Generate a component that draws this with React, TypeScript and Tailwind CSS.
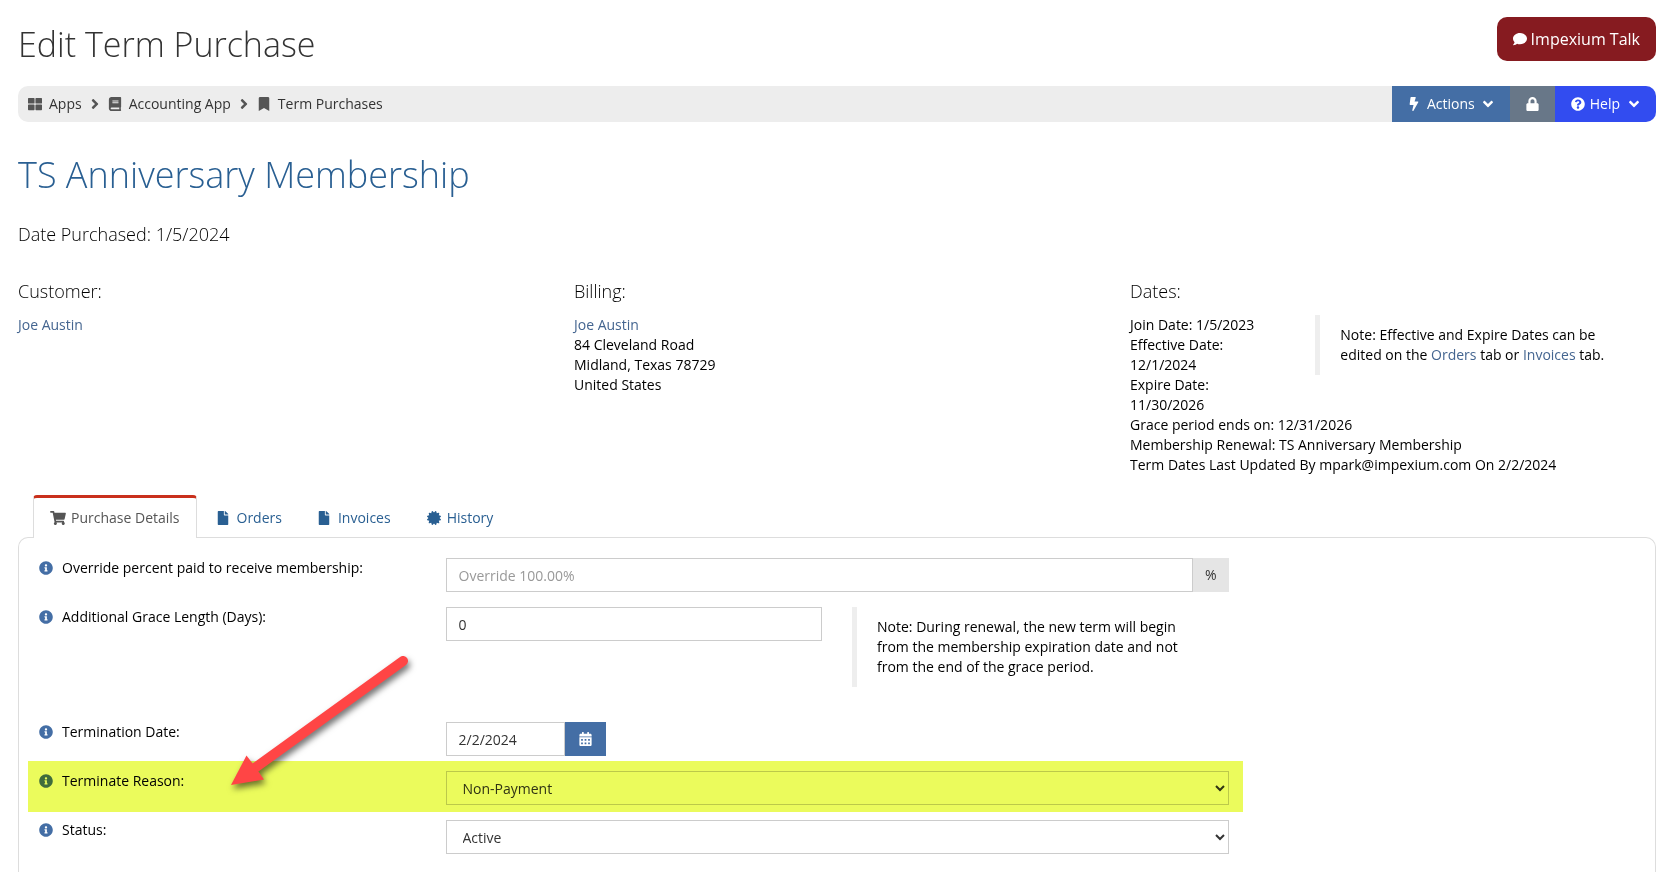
import type { ReactNode } from 'react';
import {
  FaAngleDown,
  FaAngleRight,
  FaBolt,
  FaBook,
  FaBookmark,
  FaCalendarAlt,
  FaCertificate,
  FaComment,
  FaFile,
  FaInfoCircle,
  FaLock,
  FaQuestionCircle,
  FaShoppingCart,
  FaThLarge,
} from 'react-icons/fa';

const fieldClass = 'h-[34px] w-full min-w-0 border border-[#ccc] bg-white px-3 text-sm text-[#333]';

function Header() {
  return (
    <header className="flex items-start justify-between pt-[17px]">
      <h1 className="pt-0.5 text-[34px] leading-[50px] font-light text-[#333]">Edit Term Purchase</h1>
      <button className="flex h-11 items-center gap-1 rounded-[10px] bg-[#861b20] px-4 text-base text-white">
        <FaComment className="h-3.5 w-3.5" />
        Impexium Talk
      </button>
    </header>
  );
}

function Toolbar() {
  return (
    <div className="mt-[17px] flex h-9 overflow-hidden rounded-[10px] bg-[#ededed] text-sm">
      <nav aria-label="Breadcrumb" className="flex flex-1 items-center gap-2 pl-[10px] text-[#333]">
        <a href="#apps" className="flex items-center gap-[7px]">
          <FaThLarge className="h-3.5 w-3.5 text-[#555]" />
          Apps
        </a>
        <FaAngleRight className="h-4 w-[10px] text-[#555]" />
        <a href="#accounting" className="flex items-center gap-[7px]">
          <FaBook className="h-3.5 w-3.5 text-[#555]" />
          Accounting App
        </a>
        <FaAngleRight className="h-4 w-[10px] text-[#555]" />
        <a href="#terms" className="flex items-center gap-[7px]">
          <FaBookmark className="h-3.5 w-3.5 text-[#555]" />
          Term Purchases
        </a>
      </nav>
      <button className="flex items-center gap-[7px] bg-[#446ea5] px-4 text-white">
        <FaBolt className="h-3.5 w-3" />
        Actions
        <FaAngleDown className="h-4 w-3" />
      </button>
      <button aria-label="Lock" className="flex items-center bg-[#687788] px-4 text-white">
        <FaLock className="h-3.5 w-[13px]" />
      </button>
      <button className="flex items-center gap-[5px] bg-[#324cf0] px-4 text-white">
        <FaQuestionCircle className="h-3.5 w-3.5" />
        Help
        <FaAngleDown className="ml-[3px] h-4 w-3" />
      </button>
    </div>
  );
}

function Note({ children }: { children: ReactNode }) {
  return <blockquote className="border-l-[5px] border-[#eee] px-5 py-[10px]">{children}</blockquote>;
}

function Summary() {
  return (
    <section>
      <h2 className="mt-7 text-4xl leading-[50px] font-light text-[#295f92]">TS Anniversary Membership</h2>
      <p className="mt-[22px] text-lg leading-6 font-light">Date Purchased: 1/5/2024</p>
      <div className="mt-[33px] grid grid-cols-3 gap-[30px]">
        <div>
          <h3 className="mb-3 text-lg leading-6 font-light">Customer:</h3>
          <a href="#customer" className="text-[#446590]">Joe Austin</a>
        </div>
        <div>
          <h3 className="mb-3 text-lg leading-6 font-light">Billing:</h3>
          <a href="#customer" className="text-[#446590]">Joe Austin</a>
          <address className="not-italic">
            84 Cleveland Road
            <br />
            Midland, Texas 78729
            <br />
            United States
          </address>
        </div>
        <div>
          <h3 className="mb-3 text-lg leading-6 font-light">Dates:</h3>
          <div className="grid grid-cols-3 items-start gap-[30px]">
            <div>
              <p>Join Date: 1/5/2023</p>
              <p>Effective Date: 12/1/2024</p>
              <p>Expire Date: 11/30/2026</p>
            </div>
            <div className="col-span-2">
              <Note>
                Note: Effective and Expire Dates can be edited on the{' '}
                <a href="#orders" className="text-[#446590]">Orders</a> tab or{' '}
                <a href="#invoices" className="text-[#446590]">Invoices</a> tab.
              </Note>
            </div>
          </div>
          <p>Grace period ends on: 12/31/2026</p>
          <p>Membership Renewal: TS Anniversary Membership</p>
          <p>Term Dates Last Updated By mpark@impexium.com On 2/2/2024</p>
        </div>
      </div>
    </section>
  );
}

function Tabs() {
  return (
    <div role="tablist" className="relative z-10 mt-5 -mb-px ml-[15px] flex h-[43px]">
      <button
        role="tab"
        aria-selected="true"
        className="flex items-center gap-[5px] rounded-t border-x border-t-[3px] border-x-[#ddd] border-t-[#c9301c] bg-white px-4 text-[#555]"
      >
        <FaShoppingCart className="h-3.5 w-4" />
        Purchase Details
      </button>
      <button role="tab" aria-selected="false" className="flex items-center gap-2 pt-[3px] pr-[18px] pl-5 text-[#295f92]">
        <FaFile className="h-3.5 w-3" />
        Orders
      </button>
      <button role="tab" aria-selected="false" className="flex items-center gap-2 pt-[3px] pr-[18px] pl-[18px] text-[#295f92]">
        <FaFile className="h-3.5 w-3" />
        Invoices
      </button>
      <button role="tab" aria-selected="false" className="flex items-center gap-[6px] pt-[3px] pr-[18px] pl-[18px] text-[#295f92]">
        <FaCertificate className="h-3.5 w-3.5" />
        History
      </button>
    </div>
  );
}

function FormRow({ id, label, marked, children }: { id: string; label: string; marked?: boolean; children: ReactNode }) {
  return (
    <div className="relative col-span-3 grid grid-cols-3 items-start gap-x-[30px]">
      <label htmlFor={id} className="flex items-center gap-[9px] text-black">
        <FaInfoCircle className="h-3.5 w-3.5 text-[#446ea5]" />
        {label}
      </label>
      <div className="col-span-2">{children}</div>
      {marked && (
        <>
          <div className="pointer-events-none absolute -top-2.5 -right-3.5 -bottom-[7px] -left-[11px] bg-[#ebfb5c] mix-blend-multiply" />
          <Arrow />
        </>
      )}
    </div>
  );
}

function Arrow() {
  return (
    <svg
      viewBox="225 650 190 150"
      className="pointer-events-none absolute -top-[121px] left-[186px] h-[150px] w-[190px] drop-shadow-[2px_4px_3px_rgba(0,0,0,0.55)]"
    >
      <path d="M403 661 L252 770" stroke="#ff4545" strokeWidth="10" strokeLinecap="round" />
      <path d="M231 785 L246.500 755.500 L253 764 L258 771 L264 779.500 Z" fill="#ff4545" />
    </svg>
  );
}

function PurchaseForm() {
  return (
    <form className="grid flex-1 grid-cols-4 content-start gap-x-[30px] gap-y-[15px] rounded-t-[10px] border border-b-0 border-[#ddd] px-5 pt-5">
      <FormRow id="override" label="Override percent paid to receive membership:">
        <div className="flex">
          <input id="override" placeholder="Override 100.00%" className={`${fieldClass} placeholder:text-[#999]`} />
          <span className="flex h-[34px] items-center bg-[#e5e5e5] px-3 text-[#333]">%</span>
        </div>
      </FormRow>
      <FormRow id="grace" label="Additional Grace Length (Days):">
        <div className="grid grid-cols-2 items-start gap-[30px] pb-5">
          <input id="grace" defaultValue="0" className={fieldClass} />
          <Note>
            Note: During renewal, the new term will begin from the membership expiration date and not from the end of
            the grace period.
          </Note>
        </div>
      </FormRow>
      <FormRow id="date" label="Termination Date:">
        <div className="flex">
          <div className="w-[119px]">
            <input id="date" defaultValue="2/2/2024" className={fieldClass} />
          </div>
          <button type="button" aria-label="Pick a date" className="flex h-[34px] items-center bg-[#446ea5] px-3.5 text-white">
            <FaCalendarAlt className="h-3.5 w-[13px]" />
          </button>
        </div>
      </FormRow>
      <FormRow id="reason" label="Terminate Reason:" marked>
        <select id="reason" defaultValue="Non-Payment" className={fieldClass}>
          <option>Non-Payment</option>
        </select>
      </FormRow>
      <FormRow id="status" label="Status:">
        <select id="status" defaultValue="Active" className={fieldClass}>
          <option>Active</option>
        </select>
      </FormRow>
    </form>
  );
}

export default function App() {
  return (
    <main className="flex min-h-screen flex-col bg-white pr-[13px] pl-[18px] font-['Open_Sans',sans-serif] text-sm leading-5 text-black">
      <Header />
      <Toolbar />
      <Summary />
      <Tabs />
      <PurchaseForm />
    </main>
  );
}
